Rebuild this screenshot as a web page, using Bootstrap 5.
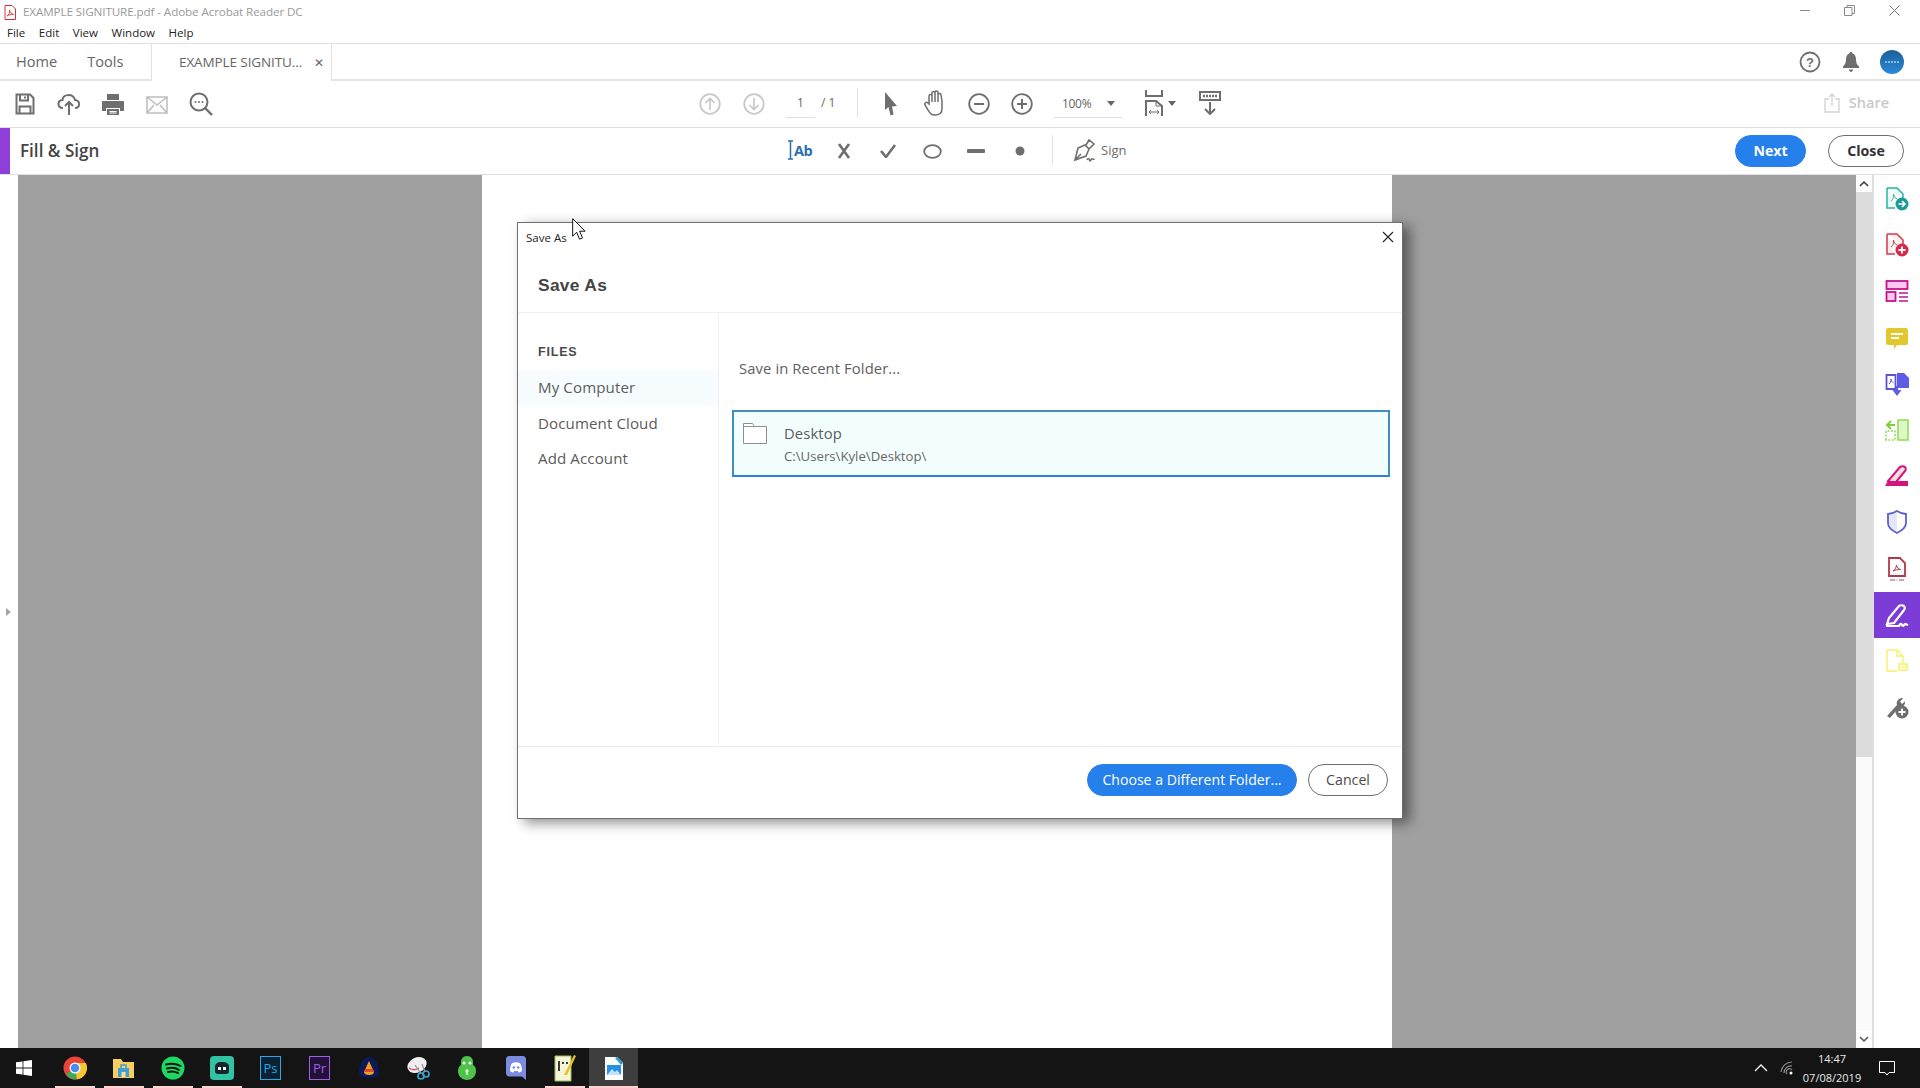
<!doctype html>
<html lang="en">
<head>
<meta charset="utf-8">
<title>Adobe Acrobat Reader DC</title>
<link href="https://cdn.jsdelivr.net/npm/bootstrap@5.3.0/dist/css/bootstrap.min.css" rel="stylesheet">
<style>
html,body{height:1088px;overflow:hidden;margin:0}
body{font-family:"Open Sans","Noto Sans",sans-serif;color:#4b4b4b;background:#fff}
.app{height:1088px;position:relative}
.title-row{height:24px;font-size:11.65px;color:#9a9a9a;padding:0 3px 0 4px}
.title-row .ttl{margin-left:7px;letter-spacing:-.1px}
.win-btn{width:45px;display:flex;justify-content:center;align-items:center;height:20px;margin-bottom:4px}
.menu-row{height:20px;border-bottom:1px solid #e2e2e2;font-size:11.5px;color:#222;padding:0 0 2px 7px;gap:13.6px}
.tab-row{height:37px;font-size:14.6px;color:#666}
.tab-home{width:151px;border-bottom:2px solid #e6e6e6;padding-left:16px;gap:30px}
.tab-cur{width:181px;border:1px solid #e2e2e2;border-width:0 1px;padding-left:27px;font-size:13.5px;letter-spacing:-.1px}
.tab-cur .xx{margin-left:12px;font-size:12px}
.tab-tail{border-bottom:2px solid #e6e6e6}
.tool-row,.fill-row{height:47px;border-bottom:1px solid #e0e0e0}
.tool-row{padding:0 0 2px 3px}
.cell{width:44px;flex:none}
.mid-a{margin-left:465px}
.cell-m{width:44px;flex:none}
.cell-n{width:43.5px;flex:none}
.page-f{margin-left:10px;width:29px;height:27px;border-bottom:1px solid #ddd;font-size:12px;text-align:center;line-height:24px;color:#666;position:relative;top:1px}
.page-t{margin-left:6px;margin-right:1px;width:16px;font-size:12px;color:#666;white-space:nowrap}
.vsep{width:1px;height:30px;background:#e2e2e2;margin-left:19px;margin-right:11px}
.zoom-f{margin-left:10px;width:68px;height:27px;border-bottom:1px solid #ddd;font-size:12px;padding-left:8px;padding-right:7px;line-height:24px;color:#666;position:relative;top:1px;letter-spacing:-.3px}
.cr{width:0;height:0;border:4px solid transparent;border-top:5px solid #666;border-bottom:0;display:inline-block}
.fit-ic{margin-left:23px}
.fit-cr{margin-left:5px;margin-right:23px}
.share{margin-left:auto;margin-right:31px;color:#c9c9c9;font-size:14.5px;font-weight:600;gap:9px}
.fill-accent{width:10px;height:46px;background:#8e3fd9}
.fill-name{width:113px;padding-left:10px;font-size:17.1px;font-weight:600;color:#444;white-space:nowrap;flex:none}
.fill-mid{margin-left:655px;padding-bottom:3px}
.fill-sep{width:1px;height:30px;background:#e2e2e2;margin-left:10px;margin-right:21px}
.sign-t{font-size:13px;color:#6a6a6a;margin-left:5px;padding-top:3px}
.btn.pill-blue{background:#2680eb;border-color:#2680eb;color:#fff;border-radius:16px;height:32px;font-size:14.1px;padding:0}
.btn.pill-out{background:#fff;border:1.5px solid #6e6e6e;color:#4b4b4b;border-radius:16px;height:32px;font-size:14.2px;padding:0}
.bt-next{width:71px;font-weight:700;margin-right:22px}
.bt-close{width:76px;font-weight:700;margin-right:16px;color:#333!important}
.main-area{height:873px}
.left-strip{width:18px;flex:none}
.tri{width:0;height:0;border:4px solid transparent;border-left:5px solid #a5a5a5;border-right:0;margin-left:6px}
.canvas-gray{background:#a0a0a0;width:1838px;flex:none}
.sheet{width:910px;background:#fff;margin:0 auto;height:100%}
.scroll-b{width:16px;flex:none;background:#fbfbfb}
.sc-btn{height:17px;background:#fff}
.sc-thumb{height:565px;background:#dcdcdc}
.side-b{border-left:2px solid #dedede;flex:1 1 auto;padding-top:1px}
.side-it{height:46.2px;flex:none}
.side-it.on{background:#7c3dd6}
.side-b svg{width:24px;height:24px}
.task-b{height:40px;background:#141414;color:#fff;position:relative}
.t-it{width:49px;height:40px;flex:none;position:relative}
.t-it.run::after{content:"";position:absolute;left:5px;right:4px;bottom:0;height:2px;background:#ffd2d0}
.t-it.act{background:#3e3e3e}
.t-it.act::after{left:0;right:0}
.t-start{width:50px;padding-right:2px}
.t-ps{font-size:13px;line-height:1;width:21px;height:24px;border:1.5px solid;display:flex;align-items:center;justify-content:center}
.tray{margin-left:auto;color:#e8e8e8}
.clk{width:62px;text-align:center;line-height:19px;margin-left:7px;margin-right:16px;font-size:11px;white-space:nowrap}
.tray-wifi{margin-left:12px}
.dlg{position:absolute;left:517px;top:222px;width:886px;height:597px;background:#fff;border:1px solid #6f6f6f;box-shadow:7px 4px 12px rgba(0,0,0,.45)}
.dlg-cap{height:28px;font-size:11.5px;color:#222;padding:0 8px 0 8px}
.dlg-cap span{padding-top:2px}
.dlg-head{height:62px;border-bottom:1px solid #f0f0f0;padding:20px 0 0 20px;font-family:"Liberation Sans",Arial,sans-serif;font-weight:700;font-size:17.4px;letter-spacing:.3px;color:#444;line-height:28px}
.dlg-body{height:433px}
.dlg-nav{width:201px;flex:none;border-right:1px solid #f0f0f0;padding-top:29px}
.dlg-files{font-family:"Liberation Sans",Arial,sans-serif;font-size:12.5px;font-weight:700;letter-spacing:.8px;color:#4b4b4b;padding-left:20px;height:28px;line-height:20px}
.dlg-nav .list-group-item{border:0;background:transparent;padding:0 0 0 20px;height:35.5px;line-height:35px;font-size:15.1px;color:#5b5b5b;letter-spacing:.1px}
.dlg-nav .list-group-item.on{background:#f6fcff}
.dlg-pane{flex:1 1 auto;padding:44px 12px 0 13px}
.dlg-sub{font-size:14.8px;color:#5f5f5f;padding-left:7px;line-height:22px;height:53px;letter-spacing:.1px}
.rec-box{height:67px;border:2px solid #3f8fc4;border-bottom-color:#2a7fe0;background:#f3feff;padding:9px 9px;gap:17px;font-size:14.8px;color:#5b5b5b}
.rec-box .nm{line-height:22px;letter-spacing:.1px;margin-top:1px}
.rec-box .pth{font-size:13.2px;line-height:20px;color:#666;margin-top:2px}
.dlg-foot{border-top:1px solid #ececec;height:72px;padding:17px 14px 0 0;gap:11px}
.bt-choose{width:210px}
.bt-cancel{width:80px}
.cur-ptr{position:absolute;left:572px;top:218px}
</style>
</head>
<body>
<div class="app d-flex flex-column">

  <div class="title-row d-flex align-items-center">
    <svg width="12" height="15" viewBox="0 0 12 15"><path d="M1 .5h7l3.5 3.5V14.500H1z" fill="#fff" stroke="#c8363b"/><path d="M3 11c2-1 3-4 2.500-6 .5 2 2 4 4 4.500-2.500-.2-4.500.3-6.500 1.500z" fill="none" stroke="#c8363b" stroke-width=".9"/></svg>
    <span class="ttl">EXAMPLE SIGNITURE.pdf - Adobe Acrobat Reader DC</span>
    <div class="ms-auto d-flex align-items-center">
      <div class="win-btn"><svg width="10" height="10" viewBox="0 0 10 10"><path d="M0 5.500h10" stroke="#8a8a8a"/></svg></div>
      <div class="win-btn"><svg width="11" height="11" viewBox="0 0 11 11"><path d="M.5 2.500h7.500v8H.5zM3 2.500V.500h7.500v8H8" fill="none" stroke="#8a8a8a"/></svg></div>
      <div class="win-btn"><svg width="11" height="11" viewBox="0 0 11 11"><path d="M.5.500l10 10M10.500.500l-10 10" stroke="#777"/></svg></div>
    </div>
  </div>

  <div class="menu-row d-flex align-items-center"><span>File</span><span>Edit</span><span>View</span><span>Window</span><span>Help</span></div>

  <div class="tab-row d-flex">
    <div class="tab-home d-flex align-items-center"><span>Home</span><span>Tools</span></div>
    <div class="tab-cur d-flex align-items-center"><span>EXAMPLE SIGNITU...</span><span class="xx">✕</span></div>
    <div class="tab-tail flex-grow-1 d-flex align-items-center justify-content-end">
      <svg width="22" height="22" viewBox="0 0 22 22"><circle cx="11" cy="11" r="9.500" fill="none" stroke="#6e6e6e" stroke-width="1.800"/><text x="11" y="15.500" font-size="13" font-weight="700" text-anchor="middle" fill="#6e6e6e" font-family="Liberation Sans">?</text></svg>
      <svg style="margin-left:21px;margin-right:20px" width="18" height="22" viewBox="0 0 18 22"><path d="M9 1c1 0 1.500.7 1.500 1.500C13 3.300 14 5.500 14 8.500c0 3 .7 5 3 7v1.500H1v-1.500c2.300-2 3-4.500 3-7 0-3 1-5.200 3.500-6C7.500 1.700 8 1 9 1zM7 18.500h4c0 1.500-1 2.500-2 2.500s-2-1-2-2.500z" fill="#6e6e6e"/></svg>
      <svg style="margin-right:16px" width="24" height="24" viewBox="0 0 24 24"><defs><linearGradient id="av" x1="0" y1="0" x2="0" y2="1"><stop offset="0" stop-color="#1c5f96"/><stop offset="1" stop-color="#2a8ad8"/></linearGradient></defs><circle cx="12" cy="12" r="12" fill="url(#av)"/><path d="M5 12h14" stroke="#9fd3f5" stroke-width="1.500" stroke-dasharray="2 1"/></svg>
    </div>
  </div>

  <div class="tool-row d-flex align-items-center">
    <div class="cell text-center"><svg width="20" height="22" viewBox="0 0 20 22"><path d="M1.500 1.500h13.500l3.500 3.500v15.500h-17z M5 1.500v6h8v-6M10 3.500v2M4.500 20.500v-7h11v7" fill="none" stroke="#6e6e6e" stroke-width="2"/></svg></div>
    <div class="cell text-center"><svg width="24" height="24" viewBox="0 0 24 24"><path d="M6 16c-6 0-6-8-.5-8C6 2 16 1 18 8c5 0 6 8 0 8M12 23V10M8 14l4-4 4 4" fill="none" stroke="#6e6e6e" stroke-width="2"/></svg></div>
    <div class="cell text-center"><svg width="22" height="22" viewBox="0 0 22 22"><path d="M5 7V1h12v6zM1 8h20c.5 0 1 .5 1 1v9h-4v-3H4v3H0V9c0-.5.500-1 1-1zM5 16h12v6H5z" fill="#6e6e6e"/><path d="M7.500 18.500h7M7.500 20h7" stroke="#fff"/></svg></div>
    <div class="cell text-center"><svg width="22" height="18" viewBox="0 0 22 18"><path d="M1 1h20v16H1zM1 1l10 8 10-8M1 17l7-8M21 17l-7-8" fill="none" stroke="#bdbdbd" stroke-width="1.500"/></svg></div>
    <div class="cell text-center"><svg width="24" height="24" viewBox="0 0 24 24"><circle cx="10" cy="10" r="8.500" fill="none" stroke="#6e6e6e" stroke-width="2"/><path d="M16 16l7 7" stroke="#6e6e6e" stroke-width="2.400"/><circle cx="6.500" cy="10" r="1" fill="#6e6e6e"/><circle cx="10" cy="10" r="1" fill="#6e6e6e"/><circle cx="13.500" cy="10" r="1" fill="#6e6e6e"/></svg></div>

    <div class="cell-m mid-a text-center"><svg width="22" height="22" viewBox="0 0 22 22"><circle cx="11" cy="11" r="9.800" fill="none" stroke="#c8c8c8" stroke-width="1.800"/><path d="M11 17V5.500M6.500 10l4.500-4.500 4.500 4.500" fill="none" stroke="#c8c8c8" stroke-width="1.600"/></svg></div>
    <div class="cell-m text-center"><svg width="22" height="22" viewBox="0 0 22 22"><circle cx="11" cy="11" r="9.800" fill="none" stroke="#c8c8c8" stroke-width="1.800"/><path d="M11 5v11.500M6.500 12l4.500 4.500 4.500-4.500" fill="none" stroke="#c8c8c8" stroke-width="1.600"/></svg></div>
    <div class="page-f">1</div>
    <div class="page-t">/ 1</div>
    <div class="vsep"></div>
    <div class="cell-m text-center"><svg width="14" height="24" viewBox="0 0 14 24"><path d="M1 0l12 14-5 .5 1.500 8-3 1L4.500 15 1 18z" fill="#6e6e6e"/></svg></div>
    <div class="cell-m text-center"><svg width="23" height="26" viewBox="0 0 23 26"><path d="M5 14V6c0-2 3-2 3 0v6-9c0-2 3-2 3 0v9-9.500c0-2 3-2 3 0V12 5c0-2 3-2 3 0l1 6v8c0 4-3 6-7 6s-5-2-7-5l-3-5c-1-2 2-4 3-2z" fill="#fff" stroke="#6e6e6e" stroke-width="1.500"/></svg></div>
    <div class="cell-n text-center"><svg width="22" height="22" viewBox="0 0 22 22"><circle cx="11" cy="11" r="9.800" fill="none" stroke="#6e6e6e" stroke-width="1.800"/><path d="M6 11h10" stroke="#6e6e6e" stroke-width="2"/></svg></div>
    <div class="cell-n text-center"><svg width="22" height="22" viewBox="0 0 22 22"><circle cx="11" cy="11" r="9.800" fill="none" stroke="#6e6e6e" stroke-width="1.800"/><path d="M6 11h10M11 6v10" stroke="#6e6e6e" stroke-width="2"/></svg></div>
    <div class="zoom-f d-flex justify-content-between align-items-center"><span>100%</span><span class="cr"></span></div>
    <svg class="fit-ic" width="18" height="26" viewBox="0 0 18 26"><path d="M1 0v6h16V0M1 26V11h10l6 5v10" fill="none" stroke="#6e6e6e" stroke-width="2"/><path d="M11 11v5h6M4 22h10M4 22l2-2M4 22l2 2M14 22l-2-2M14 22l-2 2" fill="none" stroke="#6e6e6e"/></svg>
    <span class="cr fit-cr"></span>
    <svg width="22" height="24" viewBox="0 0 22 24"><path d="M1 1h20v8H1z" fill="none" stroke="#6e6e6e" stroke-width="2"/><path d="M4 5h14" stroke="#6e6e6e" stroke-width="2.500" stroke-dasharray="2 1"/><path d="M11 11v12M6 18l5 5 5-5" fill="none" stroke="#6e6e6e" stroke-width="2"/></svg>

    <div class="share d-flex align-items-center"><svg width="16" height="20" viewBox="0 0 16 20"><path d="M5 6H1v13h14V6h-4M8 13V1M5 4l3-3 3 3" fill="none" stroke="#d4d4d4" stroke-width="1.400"/></svg><span>Share</span></div>
  </div>

  <div class="fill-row d-flex align-items-center">
    <div class="fill-accent flex-none"></div>
    <div class="fill-name">Fill &amp; Sign</div>
    <div class="fill-mid d-flex align-items-center">
      <div class="cell-m text-center"><svg width="30" height="24" viewBox="0 0 30 24"><path d="M3 3h5M5.500 3v18M3 21h5" fill="none" stroke="#2a70b0" stroke-width="1.500"/><text x="9" y="18" font-size="14.500" font-weight="700" fill="#2a70b0" font-family="Open Sans" letter-spacing="-.6">Ab</text></svg></div>
      <div class="cell-m text-center"><svg width="14" height="16" viewBox="0 0 14 16"><path d="M2 1l10 14M12 1L2 15" stroke="#6e6e6e" stroke-width="2.600"/></svg></div>
      <div class="cell-m text-center"><svg width="16" height="14" viewBox="0 0 16 14"><path d="M1 7l5 6 9-12" fill="none" stroke="#6e6e6e" stroke-width="2.600"/></svg></div>
      <div class="cell-m text-center"><svg width="19" height="15" viewBox="0 0 19 15"><ellipse cx="9.500" cy="7.500" rx="8.300" ry="6.300" fill="none" stroke="#6e6e6e" stroke-width="1.800"/></svg></div>
      <div class="cell-m text-center"><svg width="18" height="6" viewBox="0 0 18 6"><rect y="1" width="18" height="4" rx="1" fill="#6e6e6e"/></svg></div>
      <div class="cell-m text-center"><svg width="10" height="10" viewBox="0 0 10 10"><circle cx="5" cy="5" r="4.500" fill="#6e6e6e"/></svg></div>
      <div class="fill-sep"></div>
      <svg width="22" height="24" viewBox="0 0 22 24"><path d="M1 22l3-12 7-3 4 4-3 7zM1 22l6-6M12 7l3-5 5 4-5 5M13 22c1-2 2-2 2.500 0s1.500 0 2-1 1 1 3 0" fill="none" stroke="#6e6e6e" stroke-width="1.600"/></svg>
      <span class="sign-t">Sign</span>
    </div>
    <button class="btn pill-blue bt-next ms-auto" type="button">Next</button>
    <button class="btn pill-out bt-close" type="button">Close</button>
  </div>

  <div class="main-area d-flex">
    <div class="left-strip d-flex align-items-center"><div class="tri" role="presentation"></div></div>
    <div class="canvas-gray"><div class="sheet"></div></div>
    <div class="scroll-b d-flex flex-column">
      <div class="sc-btn d-flex align-items-center justify-content-center"><svg width="10" height="7" viewBox="0 0 10 7"><path d="M1 6l4-4 4 4" fill="none" stroke="#333" stroke-width="1.500"/></svg></div>
      <div class="sc-thumb"></div>
      <div class="flex-grow-1"></div>
      <div class="sc-btn d-flex align-items-center justify-content-center"><svg width="10" height="7" viewBox="0 0 10 7"><path d="M1 1l4 4 4-4" fill="none" stroke="#555" stroke-width="1.500"/></svg></div>
    </div>
    <div class="side-b d-flex flex-column">
      <div class="side-it d-flex align-items-center justify-content-center"><svg viewBox="0 0 24 24"><path d="M2 1h10l6 6v6M10 21H2V1" fill="#eafaf6" stroke="#26b5a3" stroke-width="1.500"/><path d="M6 14c2-1 3-4 2.500-7 .5 3 2 4.500 4 5" fill="none" stroke="#26b5a3"/><circle cx="17" cy="17" r="6.500" fill="#1e9a96"/><path d="M13.500 17h6M17 14l3 3-3 3" fill="none" stroke="#fff" stroke-width="1.600"/></svg></div>
      <div class="side-it d-flex align-items-center justify-content-center"><svg viewBox="0 0 24 24"><path d="M2 1h10l6 6v6M10 21H2V1" fill="#fdeeee" stroke="#d5394a" stroke-width="1.500"/><path d="M6 14c2-1 3-4 2.500-7 .5 3 2 4.500 4 5" fill="none" stroke="#d5394a"/><circle cx="17" cy="17" r="6.500" fill="#d5294a"/><path d="M13.500 17h7M17 13.500v7" stroke="#fff" stroke-width="1.800"/></svg></div>
      <div class="side-it d-flex align-items-center justify-content-center"><svg viewBox="0 0 24 24"><rect x="1.500" y="2" width="21" height="8" fill="#fbc9ef" stroke="#c4128c" stroke-width="1.800"/><rect x="1.500" y="13" width="9" height="9" fill="#fbc9ef" stroke="#c4128c" stroke-width="1.800"/><path d="M14 14h9M14 18h9M14 22h9" stroke="#c4128c" stroke-width="1.300"/></svg></div>
      <div class="side-it d-flex align-items-center justify-content-center"><svg viewBox="0 0 24 24"><path d="M3 2h18c1 0 2 1 2 2v13c0 1-1 2-2 2H12l-3 4v-4H3c-1 0-2-1-2-2V4c0-1 1-2 2-2z" fill="#e2c82c"/><path d="M6 8h12M6 12h8" stroke="#fff" stroke-width="2"/></svg></div>
      <div class="side-it d-flex align-items-center justify-content-center"><svg viewBox="0 0 24 24"><path d="M1.500 3h9v14h-9z" fill="#fff" stroke="#5a55c9" stroke-width="1.800"/><path d="M12 1h7l5 5v10H12z" fill="#5c5ce6"/><path d="M12 14v4" stroke="#5c5ce6" stroke-width="2"/><path d="M7.500 18h9L12 24z" fill="#5c5ce6"/><path d="M4 12c1.500-1 2-3 2-5 .3 2 1 3 2.500 4" fill="none" stroke="#5a55c9"/></svg></div>
      <div class="side-it d-flex align-items-center justify-content-center"><svg viewBox="0 0 24 24"><rect x="13" y="2" width="10" height="20" fill="#dff7c6" stroke="#94dc5c" stroke-width="1.600"/><path d="M1 22V13h9v9z" fill="none" stroke="#94dc5c" stroke-width="1.600" stroke-dasharray="2 1.500"/><path d="M10 7H3M6 3L2 7l4 4" fill="none" stroke="#7fce3c" stroke-width="2"/></svg></div>
      <div class="side-it d-flex align-items-center justify-content-center"><svg viewBox="0 0 24 24"><path d="M6 18l-3-1L15 3c1-1 4-1 5 0s1 3 0 4L11 18z" fill="#fdd" stroke="#d3137e" stroke-width="2"/><path d="M0 22l3-5h20v5z" fill="#d3137e"/></svg></div>
      <div class="side-it d-flex align-items-center justify-content-center"><svg viewBox="0 0 24 24"><path d="M12 1c3 2 6 3 9 3v9c0 5-5 8-9 10-4-2-9-5-9-10V4c3 0 6-1 9-3z" fill="#fff" stroke="#5a5fd1" stroke-width="1.800"/><path d="M12 2.500v19c-4-2-8-4.500-8-8.500V5c3 0 5-1 8-2.500z" fill="#e5e6fa"/></svg></div>
      <div class="side-it d-flex align-items-center justify-content-center"><svg viewBox="0 0 24 24"><path d="M4 1h11l5 5v13H4z" fill="#fff" stroke="#b5374a" stroke-width="1.800"/><path d="M8 14c2-1 3-3 3.500-6 .5 3 2 4 4 4.500-2.500 0-5 .3-7.500 1.500z" fill="none" stroke="#b5374a"/><path d="M5 23h5M14 23h5M12 22.500v1" stroke="#9a5060"/></svg></div>
      <div class="side-it on d-flex align-items-center justify-content-center"><svg viewBox="0 0 24 24"><path d="M2 21l2-6L14 3c1-1 4-1 5 0s1 3 0 4L9 20z" fill="none" stroke="#fff" stroke-width="2.200"/><path d="M1 23h13c1-2 2-3 3-1s2 0 3-1l3 1" fill="none" stroke="#fff" stroke-width="2.200"/></svg></div>
      <div class="side-it d-flex align-items-center justify-content-center"><svg viewBox="0 0 24 24"><path d="M2 1h10l6 6v7M12 22H2V1M12 1v6h6" fill="#fff" stroke="#f7f48c" stroke-width="1.800"/><rect x="13" y="14" width="10" height="8" fill="#f7f48c"/><path d="M15 17h6M15 19.500h6" stroke="#fff"/></svg></div>
      <div class="side-it d-flex align-items-center justify-content-center"><svg viewBox="0 0 24 24"><path d="M2 21L12 10c-1-3 1-7 5-7l1 .5-3 3 2 2.500 3-2.500c.5 3-2 6-6 6L5 23z" fill="#6e6e6e"/><circle cx="17" cy="17" r="6.500" fill="#6e6e6e"/><path d="M13.500 17h7M17 13.500v7" stroke="#fff" stroke-width="1.800"/></svg></div>
    </div>
  </div>

  <div class="task-b d-flex align-items-center">
    <div class="t-it t-start d-flex align-items-center justify-content-center"><svg width="16" height="16" viewBox="0 0 16 16"><path d="M0 2.300l6.600-.9v6.200H0zM7.400 1.300L16 0v7.600H7.400zM0 8.400h6.600v6.200L0 13.700zM7.400 8.400H16V16l-8.600-1.200z" fill="#fff"/></svg></div>
    <div class="t-it run d-flex align-items-center justify-content-center"><svg width="24" height="24" viewBox="0 0 24 24"><circle cx="12" cy="12" r="11.500" fill="#e8443a"/><path d="M12 12L3 18A11.500 11.500 0 0 0 14 23.300z" fill="#3ba85a"/><path d="M12 7h11a11.500 11.500 0 0 1-9 16.300L12 12z" fill="#f7c52f"/><circle cx="12" cy="12" r="5.500" fill="#fff"/><circle cx="12" cy="12" r="4.300" fill="#4a8cf0"/></svg></div>
    <div class="t-it run d-flex align-items-center justify-content-center"><svg width="23" height="22" viewBox="0 0 23 22"><path d="M1 2h8l2 3h11v16H1z" fill="#f7cf5f"/><path d="M6 11h11v9H6z" fill="#3f9fd6"/><path d="M9 11V8h5v3" fill="none" stroke="#3f9fd6" stroke-width="1.500"/><rect x="9.500" y="15" width="4" height="5" fill="#f7e09a"/></svg></div>
    <div class="t-it run d-flex align-items-center justify-content-center"><svg width="24" height="24" viewBox="0 0 24 24"><circle cx="12" cy="12" r="11.500" fill="#1ed760"/><path d="M5 8.500c5-1.500 10-1 14.500 1.500M6 12.500c4-1 9-.7 12 1.500M7 16c3-.7 7-.5 10 1" fill="none" stroke="#141414" stroke-width="2" stroke-linecap="round"/></svg></div>
    <div class="t-it run d-flex align-items-center justify-content-center"><svg width="24" height="24" viewBox="0 0 24 24"><rect width="24" height="24" rx="4" fill="#31c3a2"/><path d="M5 11c0-3 2-5 7-5s7 2 7 5v4c0 2-1 3-3 3H8c-2 0-3-1-3-3z" fill="#17242d"/><path d="M8 11h3v3H8zM13 11h3v3h-3z" fill="#fff"/></svg></div>
    <div class="t-it d-flex align-items-center justify-content-center"><span class="t-ps" style="color:#2ba6e8;background:#0a2233">Ps</span></div>
    <div class="t-it d-flex align-items-center justify-content-center"><span class="t-ps" style="color:#a45ce0;background:#22123a">Pr</span></div>
    <div class="t-it d-flex align-items-center justify-content-center"><svg width="22" height="24" viewBox="0 0 22 24"><path d="M1 17C1 8 5 1 11 1s10 7 10 16c0 3-4 5-10 5S1 20 1 17z" fill="#0c1a5a"/><path d="M11 5l5 11c0 2-2 3-5 3s-5-1-5-3z" fill="#f29f1f"/><path d="M7 13h8l1 3H6z" fill="#e4482a"/></svg></div>
    <div class="t-it d-flex align-items-center justify-content-center"><svg width="24" height="24" viewBox="0 0 24 24"><ellipse cx="11" cy="9" rx="10" ry="7.500" fill="#f0efef" transform="rotate(-25 11 9)"/><path d="M3 12c3 2 7 2 10 0" stroke="#e04a6a" stroke-width="1.500" fill="none"/><circle cx="15" cy="20" r="3" fill="none" stroke="#3aa0d0" stroke-width="1.700"/><circle cx="20" cy="18" r="3" fill="none" stroke="#3aa0d0" stroke-width="1.700"/><path d="M9 9l6 9M16 8l3 8" stroke="#999" stroke-width="1.300"/></svg></div>
    <div class="t-it d-flex align-items-center justify-content-center"><svg width="20" height="26" viewBox="0 0 20 26"><path d="M10 1c4 0 6 3 6 6v3c2 1 3 3 3 6 0 6-5 9-9 9s-9-3-9-9c0-3 1-5 3-6V7c0-3 2-6 6-6z" fill="#4fc24a"/><circle cx="7" cy="8" r="1.500" fill="#fff"/><circle cx="13" cy="8" r="1.500" fill="#fff"/><path d="M10 14a2 2 0 0 0-1 3.500V20h2v-2.500A2 2 0 0 0 10 14z" fill="#d2f2cc"/></svg></div>
    <div class="t-it d-flex align-items-center justify-content-center"><svg width="20" height="24" viewBox="0 0 20 24"><path d="M3 0h14c1.500 0 3 1.500 3 3v21l-4-3.500H3c-1.500 0-3-1.500-3-3V3C0 1.500 1.500 0 3 0z" fill="#7a8be0"/><path d="M4 15c0-4 1-7 2.500-8 2.500-1 4.500-1 7 0C15 8 16 11 16 15c-1.500 1-3 1.500-3.500 1.500l-.7-1.500H8.200l-.7 1.500C7 16.500 5.500 16 4 15z" fill="#fff"/><circle cx="7.800" cy="11.500" r="1.300" fill="#7a8be0"/><circle cx="12.200" cy="11.500" r="1.300" fill="#7a8be0"/></svg></div>
    <div class="t-it run d-flex align-items-center justify-content-center"><svg width="22" height="28" viewBox="0 0 22 28"><path d="M1 2h16v25H1z" fill="#f7f5d8" stroke="#9bbf55"/><path d="M4 7h2v10H4zM8 8h2v2H8zM12 8h2v2h-2z" fill="#3a3a3a"/><path d="M10 21L20 1l2 1-9 19z" fill="#e8c22c"/></svg></div>
    <div class="t-it run act d-flex align-items-center justify-content-center"><svg width="20" height="26" viewBox="0 0 20 26"><path d="M1 2h12l6 6v17H1z" fill="#fff"/><path d="M3 10h14v10H3z" fill="#2490e8"/><path d="M3 20l5-6 3 3 2-2 4 5z" fill="#bfe2ff"/><path d="M13 2l6 6-2 2-6-7z" fill="#2a9be0"/></svg></div>

    <div class="tray d-flex align-items-center">
      <svg width="14" height="8" viewBox="0 0 14 8"><path d="M1 7l6-6 6 6" fill="none" stroke="#fff" stroke-width="1.300"/></svg>
      <svg class="tray-wifi" width="14" height="14" viewBox="0 0 14 14"><path d="M1 11a11 11 0 0 1 11-10M4 12a7 7 0 0 1 8-7M7 13a3 3 0 0 1 5-4" fill="none" stroke="#8a8a8a" stroke-width="1.200"/><circle cx="11" cy="12" r="1.500" fill="#fff"/></svg>
      <div class="clk"><div>14:47</div><div>07/08/2019</div></div>
      <svg style="margin-right:25px" width="16" height="15" viewBox="0 0 16 15"><path d="M.5.500h15v11h-5.500l-2 2.500-2-2.500H.5z" fill="none" stroke="#fff"/></svg>
    </div>
  </div>

  <div class="dlg d-flex flex-column">
    <div class="dlg-cap d-flex align-items-center justify-content-between">
      <span>Save As</span>
      <svg width="12" height="12" viewBox="0 0 12 12"><path d="M1 1l10 10M11 1L1 11" stroke="#222" stroke-width="1.100"/></svg>
    </div>
    <div class="dlg-head">Save As</div>
    <div class="dlg-body d-flex">
      <div class="dlg-nav">
        <div class="dlg-files">FILES</div>
        <div class="list-group list-group-flush">
          <div class="list-group-item on">My Computer</div>
          <div class="list-group-item">Document Cloud</div>
          <div class="list-group-item">Add Account</div>
        </div>
      </div>
      <div class="dlg-pane">
        <div class="dlg-sub">Save in Recent Folder...</div>
        <div class="rec-box d-flex">
          <svg class="flex-none" width="24" height="21" viewBox="0 0 24 21" style="margin-top:2px"><path d="M.5 20.500V.500h9l2 3h12v17zM.5 3.500h11" fill="#fff" stroke="#8e8e8e"/></svg>
          <div><div class="nm">Desktop</div><div class="pth">C:\Users\Kyle\Desktop\</div></div>
        </div>
      </div>
    </div>
    <div class="dlg-foot d-flex justify-content-end">
      <button class="btn pill-blue bt-choose" type="button">Choose a Different Folder...</button>
      <button class="btn pill-out bt-cancel" type="button">Cancel</button>
    </div>
  </div>

  <svg class="cur-ptr" width="14" height="23" viewBox="0 0 14 23"><path d="M.7.700v17.500l4-4 2.800 7 3-1.300-2.900-6.700h5.500z" fill="#fff" stroke="#111"/></svg>
</div>
<script src="https://cdn.jsdelivr.net/npm/bootstrap@5.3.0/dist/js/bootstrap.bundle.min.js"></script>
</body>
</html>
